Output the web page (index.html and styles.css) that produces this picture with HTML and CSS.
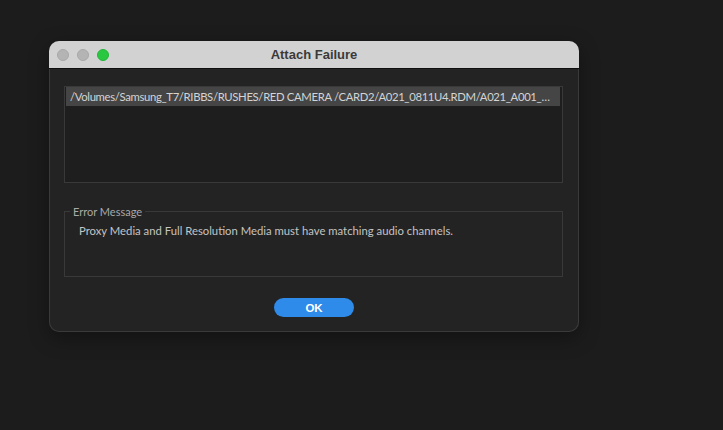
FILE: index.html
```html
<!DOCTYPE html>
<html>
<head>
<meta charset="utf-8">
<link rel="stylesheet" href="styles.css">
</head>
<body>
<div class="window">
  <div class="titlebar">
    <div class="lights">
      <span class="light grey"></span>
      <span class="light grey"></span>
      <span class="light green"></span>
    </div>
    <div class="title">Attach Failure</div>
  </div>
  <div class="content">
    <div class="list">
      <div class="row">/Volumes/Samsung_T7/RIBBS/RUSHES/RED CAMERA /CARD2/A021_0811U4.RDM/A021_A001_0811F7_001.R3D</div>
    </div>
    <fieldset class="group">
      <legend class="legend">Error Message</legend>
      <div class="message">Proxy Media and Full Resolution Media must have matching audio channels.</div>
    </fieldset>
    <div class="actions">
      <button class="ok">OK</button>
    </div>
  </div>
</div>
</body>
</html>
```

FILE: styles.css
```css
html, body {
  margin: 0;
  padding: 0;
  background: #1c1c1c;
  width: 723px;
  height: 430px;
  overflow: hidden;
  font-family: "Lato", "Open Sans", sans-serif;
}
body {
  padding: 41px 0 0 49px;
  box-sizing: border-box;
}
.window {
  width: 530px;
  height: 291px;
  border-radius: 10px;
  background: #232323;
  box-shadow: inset 0 0 0 1px #3a3a3a, 0 6px 20px rgba(0,0,0,0.35);
  overflow: hidden;
  display: flex;
  flex-direction: column;
  box-sizing: border-box;
}
.titlebar {
  height: 27px;
  flex: none;
  background: #d2d2d2;
  border-bottom: 1px solid #0f0f0f;
  display: flex;
  align-items: center;
  position: relative;
}
.lights {
  display: flex;
  gap: 8px;
  padding-left: 8px;
}
.light {
  width: 12px;
  height: 12px;
  border-radius: 50%;
  box-sizing: border-box;
}
.light.grey {
  background: #b4b4b4;
  border: 1px solid #a8a8a8;
}
.light.green {
  background: #2ac841;
  border: 1px solid #22b437;
}
.title {
  position: absolute;
  left: 0;
  right: 0;
  top: 0;
  bottom: 0;
  display: flex;
  align-items: center;
  justify-content: center;
  font-family: "Liberation Sans", Arial, sans-serif;
  font-weight: bold;
  font-size: 13px;
  color: #3a3a3a;
  pointer-events: none;
}
.content {
  flex: 1;
  padding: 17px 16px 14px 15px;
  display: flex;
  flex-direction: column;
}
.list {
  height: 97px;
  border: 1px solid #393939;
  background: #1e1e1e;
  box-sizing: border-box;
  padding: 0 2px 0 1px;
}
.row {
  height: 19px;
  line-height: 19px;
  background: #454545;
  color: #d4d4d4;
  font-size: 11.3px;
  letter-spacing: -0.34px;
  padding: 0 4px;
  white-space: nowrap;
  overflow: hidden;
  text-overflow: ellipsis;
}
.group {
  margin: 22px 0 0 0;
  padding: 6px 14px 0 14px;
  border: 1px solid #393939;
  height: 72px;
  box-sizing: border-box;
  min-width: 0;
}
.legend {
  padding: 0 3px;
  margin-left: -9px;
  color: #a8a8a8;
  font-size: 11px;
}
.message {
  color: #c4c4c4;
  font-size: 11.3px;
  line-height: 14px;
}
.actions {
  display: flex;
  justify-content: center;
  margin-top: 21px;
}
.ok {
  width: 80px;
  height: 19px;
  border: none;
  border-radius: 10px;
  background: #2e8be9;
  color: #ffffff;
  font-family: "Liberation Sans", Arial, sans-serif;
  font-weight: bold;
  font-size: 11.5px;
  padding: 0;
  margin-left: 1px;
}
```
